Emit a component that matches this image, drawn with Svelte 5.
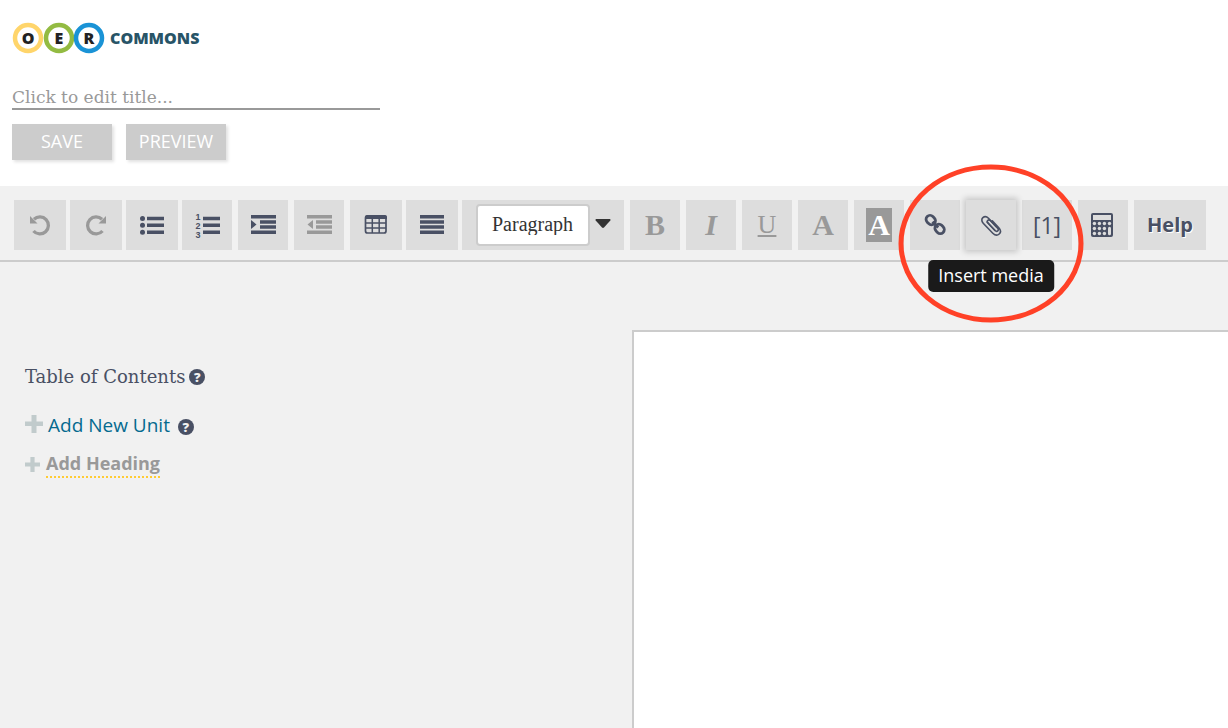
<script>
  let title = "";
  let style = "Paragraph";

  const rings = [
    { letter: "O", x: 16, color: "#ffd56b" },
    { letter: "E", x: 47, color: "#93bb42" },
    { letter: "R", x: 77, color: "#1a93d6" },
  ];

  const blockTools = [
    { id: "undo", label: "Undo", wide: true, muted: true },
    { id: "redo", label: "Redo", wide: true, muted: true },
    { id: "bullets", label: "Bulleted list", wide: true },
    { id: "numbers", label: "Numbered list" },
    { id: "indent", label: "Indent" },
    { id: "outdent", label: "Outdent", muted: true },
    { id: "table", label: "Table", wide: true },
    { id: "justify", label: "Justify", wide: true },
  ];

  const textTools = [
    { id: "bold", label: "Bold", text: "B" },
    { id: "italic", label: "Italic", text: "I" },
    { id: "underline", label: "Underline", text: "U" },
    { id: "color", label: "Text color", text: "A" },
    { id: "background", label: "Background color", text: "A" },
  ];
</script>

<header>
  <a class="logo" href="/" aria-label="OER Commons">
    <svg width="204" height="32" viewBox="0 0 204 32">
      {#each rings as ring}
        <circle cx={ring.x} cy="16" r="13" fill="#fff" stroke={ring.color} stroke-width="4.500" />
        <text class="ring-letter" x={ring.x} y="22" text-anchor="middle">{ring.letter}</text>
      {/each}
      <text class="logo-name" x="98" y="22">COMMONS</text>
    </svg>
  </a>
  <input class="title" type="text" aria-label="Title" placeholder="Click to edit title..." bind:value={title} />
  <div class="actions">
    <button type="button">SAVE</button>
    <button type="button">PREVIEW</button>
  </div>
</header>

<div class="toolbar" role="toolbar" aria-label="Formatting">
  {#each blockTools as tool}
    <div class="slot">
      <button type="button" class="tool" class:wide={tool.wide} class:muted={tool.muted} aria-label={tool.label}>
        <svg width="28" height="28" viewBox="0 0 28 28" fill="currentColor">
          {#if tool.id === "undo" || tool.id === "redo"}
            <g transform={tool.id === "redo" ? "translate(28 0) scale(-1 1)" : null}>
              <path d="M8 8.300A8.500 8.500 0 1 1 7.500 20" fill="none" stroke="currentColor" stroke-width="3.300" />
              <path d="M4 5v7.500h7.500z" />
            </g>
          {:else if tool.id === "bullets"}
            <circle cx="4.500" cy="7.500" r="2.500" />
            <circle cx="4.500" cy="14.300" r="2.500" />
            <circle cx="4.500" cy="21.300" r="2.500" />
            <path d="M9 5.700h17v3.600H9zM9 12.500h17v3.600H9zM9 19.500h17v3.600H9z" />
          {:else if tool.id === "numbers"}
            <path d="M10 5.700h17v3.600H10zM10 12.500h17v3.600H10zM10 19.500h17v3.600H10z" />
            <text class="digit" x="5" y="9">1</text>
            <text class="digit" x="5" y="18">2</text>
            <text class="digit" x="5" y="27">3</text>
          {:else if tool.id === "indent"}
            <path d="M2 4h25v3.500H2zM11 9.200h16v3.500H11zM11 14.300h16v3.500H11zM2 19.500h25v3.500H2zM2 9l5.500 4.500L2 18z" />
          {:else if tool.id === "outdent"}
            <path d="M2 4h25v3.500H2zM11 9.200h16v3.500H11zM11 14.300h16v3.500H11zM2 19.500h25v3.500H2zM8 9l-5.500 4.500L8 18z" />
          {:else if tool.id === "table"}
            <path d="M5 4h18q2 0 2 2v2H3V6q0-2 2-2z" />
            <rect x="3.500" y="5" width="20.500" height="17" rx="2" fill="none" stroke="currentColor" stroke-width="1.700" />
            <path d="M10.300 7v15M17.200 7v15M4 12h20M4 17h20" fill="none" stroke="currentColor" stroke-width="1.500" />
          {:else}
            <path d="M2 4h24v3.500H2zM2 9.200h24v3.500H2zM2 14.300h24v3.500H2zM2 19.500h24v3.500H2z" />
          {/if}
        </svg>
      </button>
    </div>
  {/each}

  <div class="format">
    <select aria-label="Paragraph style" bind:value={style}>
      <option>Paragraph</option>
      <option>Heading</option>
    </select>
    <svg width="16" height="12" viewBox="0 0 16 12"><path d="M1 0h14q1 .5 .3 1.500L9 8.500q-1 .8-2 0L.7 1.500Q0 .5 1 0z" fill="#333" /></svg>
  </div>

  {#each textTools as tool}
    <div class="slot">
      <button type="button" class="tool muted letter" aria-label={tool.label}><span class={tool.id}>{tool.text}</span></button>
    </div>
  {/each}

  <div class="slot">
    <button type="button" class="tool" aria-label="Insert link">
      <svg width="28" height="28" viewBox="0 0 28 28" fill="none" stroke="currentColor" stroke-width="2.800">
        <g transform="rotate(45 14 14)">
          <rect x="2.500" y="9.500" width="10" height="8" rx="4" />
          <rect x="15" y="9.500" width="10" height="8" rx="4" />
          <path d="M10 13.500h8" />
        </g>
      </svg>
    </button>
  </div>
  <div class="slot media">
    <button type="button" class="tool active" aria-label="Insert media" aria-describedby="media-tip">
      <svg width="28" height="28" viewBox="0 0 28 28" fill="none" stroke="currentColor" stroke-width="1.600" stroke-linecap="round">
        <path d="M10 11l8 8.500c2 2 4.500-.2 2.600-2.300L11.500 7.300C7.500 3.200 2.300 8 6.200 12.200l9.600 10c4.700 4.700 10.400-.7 6-5.500l-6.500-6.800" />
        <path d="M18 19.500L11 12c-2-2 .7-4.300 2.500-2.300l5.500 5.800" />
      </svg>
    </button>
    <span class="tooltip" id="media-tip" role="tooltip">Insert media</span>
    <svg class="ring" width="186" height="160" viewBox="0 0 186 160">
      <ellipse cx="93" cy="80.500" rx="90" ry="76.500" fill="none" stroke="#ff4127" stroke-width="5" />
    </svg>
  </div>
  <div class="slot">
    <button type="button" class="tool footnote" aria-label="Footnote">[1]</button>
  </div>
  <div class="slot">
    <button type="button" class="tool" aria-label="Formula">
      <svg width="28" height="28" viewBox="0 0 28 28">
        <rect x="2" y="2" width="22" height="24" rx="2" fill="currentColor" />
        <rect x="4" y="4" width="18" height="5" fill="#ddd" />
        <g fill="#ddd">
          {#each [12.5, 17.5, 22.5] as y}
            {#each [5.4, 10.4, 15.4] as x}
              <circle cx={x} cy={y} r="1.700" />
            {/each}
          {/each}
          <circle cx="20.500" cy="12.500" r="1.700" />
          <rect x="19" y="15.700" width="3" height="8.500" rx="1.500" />
        </g>
      </svg>
    </button>
  </div>
  <button type="button" class="tool help">Help</button>
</div>

<main>
  <aside>
    <h2>Table of Contents <button type="button" class="hint" aria-label="About contents">?</button></h2>
    <div class="row unit">
      <svg width="18" height="22" viewBox="0 0 18 22"><path d="M6.500 1h5v6.500H18v4.500h-6.500V19h-5v-7H0V7.500h6.500z" fill="#c1cbcc" /></svg>
      <a href="#unit">Add New Unit</a>
      <button type="button" class="hint" aria-label="About units">?</button>
    </div>
    <div class="row heading">
      <svg width="15" height="15" viewBox="0 0 18 18"><path d="M6.500 0h5v6.500H18v5h-6.500V18h-5v-6.500H0v-5h6.500z" fill="#c1cbcc" /></svg>
      <a href="#heading">Add Heading</a>
    </div>
  </aside>
  <section class="editor" aria-label="Content"></section>
</main>

<style>
  :global(body) {
    background: #f1f1f1;
    overflow: hidden;
  }

  :global(#app) {
    display: flex;
    flex-direction: column;
    min-height: 100vh;
    font-family: "Open Sans", sans-serif;
    color: #495064;
  }

  button,
  input,
  select {
    font: inherit;
    border: 0;
    padding: 0;
    margin: 0;
  }

  header {
    background: #fff;
    padding: 22px 12px 26px;
  }

  .logo,
  .logo svg {
    display: block;
    width: fit-content;
  }

  .ring-letter {
    font: 800 16px "Open Sans", sans-serif;
    fill: #222;
  }

  .logo-name {
    font: 800 16px "Open Sans", sans-serif;
    fill: #285467;
  }

  .title {
    display: block;
    width: 368px;
    max-width: 100%;
    height: 24px;
    margin-top: 30px;
    padding-top: 2px;
    box-sizing: border-box;
    height: 26px;
    background: none;
    border-bottom: 2px solid #999;
    border-radius: 0;
    font-family: "DejaVu Serif", serif;
    font-size: 17px;
  }

  .title::placeholder {
    color: #999;
    opacity: 1;
  }

  .actions {
    display: flex;
    gap: 14px;
    margin-top: 14px;
  }

  .actions button {
    width: 100px;
    height: 36px;
    padding-bottom: 2px;
    background: #ccc;
    color: #fff;
    font-size: 18px;
    font-weight: 500;
    box-shadow: 2px 2px 3px rgba(0, 0, 0, 0.12);
  }

  .toolbar {
    display: flex;
    padding: 14px 14px 10px;
    border-bottom: 2px solid #ccc;
  }

  .slot {
    flex: 0 0 56px;
  }

  .tool {
    display: flex;
    align-items: center;
    justify-content: center;
    width: 50px;
    height: 50px;
    background: #ddd;
    color: #495064;
  }

  .wide {
    width: 52px;
  }

  .muted {
    color: #999;
  }

  .digit {
    font: bold 9px "Liberation Sans", sans-serif;
    text-anchor: middle;
  }

  .letter {
    font: bold 30px "Liberation Serif", serif;
  }

  .italic {
    font-style: italic;
  }

  .underline {
    font-size: 26px;
    font-weight: normal;
    text-decoration: underline;
    text-decoration-thickness: 2px;
    text-underline-offset: 2px;
  }

  .background {
    width: 26px;
    line-height: 34px;
    background: #999;
    color: #fff;
  }

  .format {
    display: flex;
    align-items: center;
    gap: 5px;
    box-sizing: border-box;
    flex: 0 0 162px;
    height: 50px;
    margin-right: 6px;
    padding-left: 14px;
    background: #ddd;
  }

  .format select {
    appearance: none;
    width: 114px;
    height: 42px;
    padding: 0 14px 2px;
    background: #fff;
    border: 2px solid #ccc;
    border-radius: 4px;
    color: #333;
    font-family: "Liberation Serif", serif;
    font-size: 20px;
  }

  .media {
    position: relative;
  }

  .active {
    box-shadow: 0 0 6px 2px rgba(0, 0, 0, 0.18);
  }

  .tooltip {
    position: absolute;
    z-index: 1;
    top: 60px;
    left: 25px;
    transform: translateX(-50%);
    padding: 0 10px 2px;
    border-radius: 5px;
    background: #1a1a1a;
    color: #fff;
    font-size: 18px;
    line-height: 30px;
    white-space: nowrap;
  }

  .ring {
    position: absolute;
    z-index: 2;
    top: -37px;
    left: -68px;
    pointer-events: none;
  }

  .footnote {
    font-size: 23px;
  }

  .help {
    flex: 0 0 72px;
    padding-bottom: 2px;
    font-size: 20px;
    font-weight: bold;
    text-shadow: 1px 1px 0 #fff;
  }

  main {
    display: flex;
    flex: 1;
  }

  aside {
    box-sizing: border-box;
    width: 632px;
    padding: 102px 25px 0;
  }

  h2 {
    display: flex;
    align-items: center;
    gap: 4px;
    margin: 0;
    font-family: "DejaVu Serif", serif;
    font-size: 18px;
    font-weight: normal;
    line-height: 26px;
  }

  .hint {
    width: 16px;
    height: 16px;
    border-radius: 50%;
    background: #495064;
    color: #f1f1f1;
    font: 800 13px/16px "Open Sans", sans-serif;
  }

  .row {
    display: flex;
    align-items: center;
    gap: 5px;
  }

  .row a {
    text-decoration: none;
  }

  .unit {
    margin-top: 20px;
    font-size: 19px;
    line-height: 30px;
  }

  .unit a {
    color: #056a8f;
  }

  .unit .hint {
    margin: 4px 0 0 3px;
  }

  .heading {
    gap: 6px;
    margin-top: 10px;
    font-size: 18px;
    font-weight: bold;
    line-height: 26px;
  }

  .heading a {
    color: #999;
    border-bottom: 2px dotted #fc3;
  }

  .editor {
    flex: 1;
    margin-top: 68px;
    background: #fff;
    border: 2px solid #ccc;
    border-width: 2px 0 0 2px;
  }
</style>
